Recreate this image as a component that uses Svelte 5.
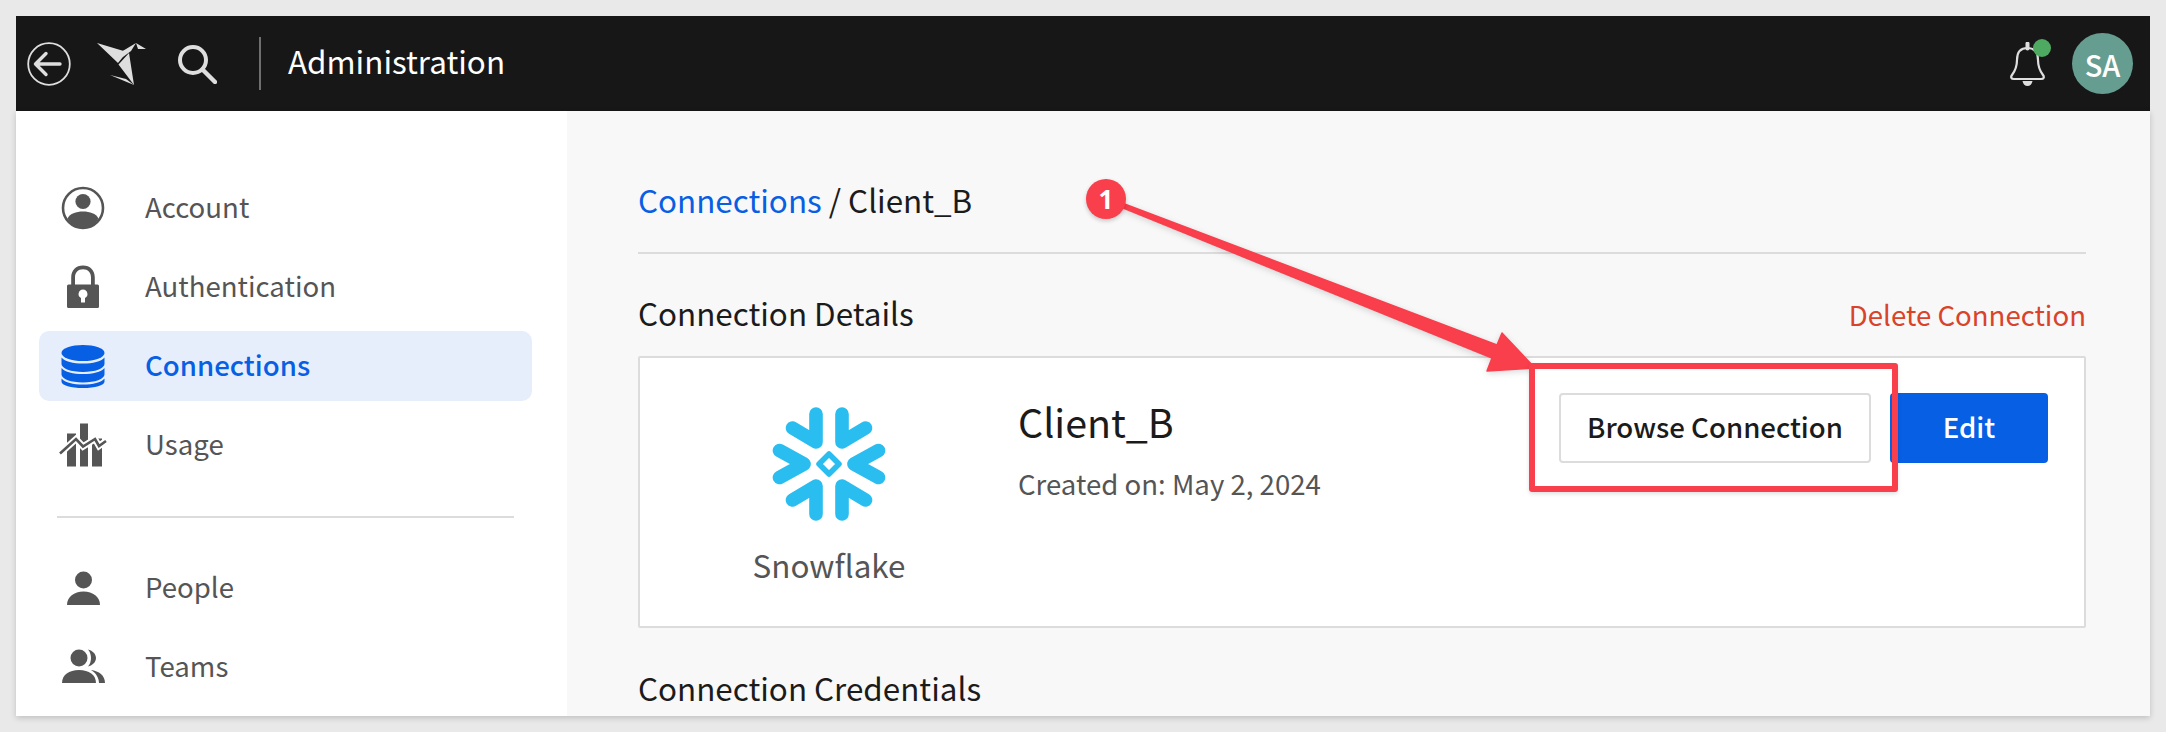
<script>
  const top = [
    { label: 'Account', icon: 'account' },
    { label: 'Authentication', icon: 'lock' },
    { label: 'Connections', icon: 'db', active: true },
    { label: 'Usage', icon: 'usage' }
  ];
  const bottom = [
    { label: 'People', icon: 'person' },
    { label: 'Teams', icon: 'teams' }
  ];
</script>

{#snippet navIcon(name)}
  <svg class="navicon" viewBox="0 0 48 48" aria-hidden="true">
    {#if name === 'account'}
      <circle cx="24" cy="24" r="20" fill="none" stroke="currentColor" stroke-width="2.6"/>
      <circle cx="24" cy="17.5" r="7.6" fill="currentColor"/>
      <path d="M8.5 34.5C11 29.5 17 27.5 24 27.5s13 2 15.5 7C36 40.5 30.5 44 24 44S12 40.5 8.5 34.5z" fill="currentColor"/>
    {:else if name === 'lock'}
      <path fill-rule="evenodd" fill="currentColor" d="M9.5 21.5h2.7V14.500C12.200 7 17 2.500 24 2.500S35.800 7 35.800 14.500v7h2.700a1.500 1.500 0 0 1 1.500 1.500v20.500a1.500 1.500 0 0 1-1.500 1.500h-29A1.500 1.500 0 0 1 8 43.500V23a1.500 1.500 0 0 1 1.500-1.500zM16 21.500h16v-7C32 9.500 29 6.300 24 6.300s-8 3.200-8 8.200zM24 26.500a4.500 4.500 0 0 0-2 8.500v4.500h4V35a4.500 4.500 0 0 0-2-8.500z"/>
    {:else if name === 'db'}
      <ellipse cx="24" cy="11" rx="21.500" ry="8" fill="currentColor"/>
      <path fill="currentColor" d="M2.500 15.500C6 19.500 14 21.500 24 21.500s18-2 21.500-6v6.500c0 4.400-9.600 8-21.500 8S2.500 26.400 2.500 22z"/>
      <path fill="currentColor" d="M2.500 26C6 30 14 32 24 32s18-2 21.500-6v6.500c0 4.400-9.600 8-21.500 8S2.500 36.900 2.500 32.500z"/>
      <path fill="currentColor" d="M2.500 36.500C6 40.500 14 42.500 24 42.500s18-2 21.500-6v3c0 4-9.600 6.500-21.500 6.500S2.500 43.500 2.500 39.500z"/>
    {:else if name === 'usage'}
      <path fill="currentColor" d="M8 12.500h9v33H8zM21 2.500h8v43h-8zM33 17.500h10v28H33z"/>
      <path fill="none" stroke="#fff" stroke-width="6.500" d="M1 32.500L17 18l7 7.500L36 18l4 7 7-5"/>
      <path fill="none" stroke="currentColor" stroke-width="2.600" d="M1 32.500L17 18l7 7.500L36 18l4 7 7-5"/>
    {:else if name === 'person'}
      <circle cx="24.500" cy="16" r="8.500" fill="currentColor"/>
      <path fill="currentColor" d="M8 41C8 33 15 27.500 24.500 27.500S41 33 41 41z"/>
    {:else if name === 'teams'}
      <circle cx="20" cy="15" r="8.500" fill="currentColor"/>
      <path fill="currentColor" d="M29 6.500C33 7.500 37 10.500 37 15s-4 7.500-8 8.500C31 21.500 32 18 32 15s-1-6.500-3-8.500z"/>
      <path fill="currentColor" d="M3 40C3 32 10 27 20 27s17 5 17 13z"/>
      <path fill="currentColor" d="M32 27c8 1 14 5.500 14 13h-6c0-5-3-10-8-13z"/>
    {/if}
  </svg>
{/snippet}

<div class="win">
  <header class="topbar">
    <div class="lead">
      <svg class="back" viewBox="0 0 44 44" aria-hidden="true">
        <circle cx="22" cy="22" r="20.800" fill="none" stroke="#dedede" stroke-width="1.800"/>
        <path d="M33 22H10M19 11.500L8.500 22 19 32.500" fill="none" stroke="#dedede" stroke-width="3.400" stroke-linecap="round" stroke-linejoin="round"/>
      </svg>
      <svg class="logo" viewBox="0 0 49 42" aria-hidden="true">
        <path fill="#dedede" d="M0 0L30 9 21 20zM24 9L39 0 34 8 26 14zM39 0L49 6 41 6zM21.500 21.500L32 10l5 32zM13 32L29 36 37 42z"/>
      </svg>
      <svg class="search" viewBox="0 0 40 40" aria-hidden="true">
        <circle cx="16" cy="16" r="13" fill="none" stroke="#dedede" stroke-width="4"/>
        <path d="M26 26l12 12" stroke="#dedede" stroke-width="4.400" stroke-linecap="round"/>
      </svg>
      <span class="vrule"></span>
      <span class="title">Administration</span>
    </div>
    <div class="trail">
      <div class="bell">
        <svg viewBox="0 0 37 44" aria-hidden="true">
          <path d="M18.500 1.500v5" stroke="#dedede" stroke-width="4" stroke-linecap="round"/>
          <path d="M18.500 6C11 6 8 11 8 18c0 7-2 11-5 15-1.500 2-1 4 2 4h27c3 0 3.500-2 2-4-3-4-5-8-5-15 0-7-3-12-10.500-12z" fill="none" stroke="#dedede" stroke-width="2.200"/>
          <path d="M13.500 39h10c-.5 3-2.500 5-5 5s-4.500-2-5-5z" fill="#dedede"/>
        </svg>
        <span class="dot"></span>
      </div>
      <div class="avatar">SA</div>
    </div>
  </header>

  <div class="body">
    <aside class="side">
      <nav class="group">
        {#each top as item}
          <div class="row" class:active={item.active}>
            <span class="iconbox">{@render navIcon(item.icon)}</span>
            <span class="rowlabel">{item.label}</span>
          </div>
        {/each}
      </nav>
      <hr class="siderule" />
      <nav class="group">
        {#each bottom as item}
          <div class="row">
            <span class="iconbox">{@render navIcon(item.icon)}</span>
            <span class="rowlabel">{item.label}</span>
          </div>
        {/each}
      </nav>
    </aside>

    <main class="main">
      <div class="crumbs"><span class="link">Connections</span> / Client_B</div>
      <div class="sechead">
        <h2>Connection Details</h2>
        <span class="danger">Delete Connection</span>
      </div>
      <section class="card">
        <div class="brand">
          <svg class="flake" viewBox="-57 -57 114 114" aria-hidden="true">
            <g fill="none" stroke="#29bdf0" stroke-width="13.600" stroke-linecap="round" stroke-linejoin="round">
              <path d="M-13-50V-22L-36.500-36"/>
              <path d="M13-50V-22L36.500-36"/>
              <path d="M-49.500-13.500L-25 0-49.500 13.500"/>
              <path d="M49.500-13.500L25 0 49.500 13.500"/>
              <path d="M-13 50V22L-36.500 36"/>
              <path d="M13 50V22L36.500 36"/>
            </g>
            <path fill="none" stroke="#29bdf0" stroke-width="5.500" stroke-linejoin="round" d="M0-10L10 0 0 10-10 0z"/>
          </svg>
          <span class="brandname">Snowflake</span>
        </div>
        <div class="info">
          <div class="name">Client_B</div>
          <div class="meta">Created on: May 2, 2024</div>
        </div>
        <div class="actions">
          <button class="btn ghost">Browse Connection</button>
          <button class="btn solid">Edit</button>
        </div>
      </section>
      <h2 class="cred">Connection Credentials</h2>
    </main>
  </div>

  <svg class="arrow" viewBox="0 0 2166 732" aria-hidden="true">
    <polygon points="1106,197 1497,345 1502,333 1535,368 1487,371 1492,358 1106,201" fill="#f93e4c" stroke="#f93e4c" stroke-width="1.500" stroke-linejoin="round"/>
  </svg>
  <div class="badge">1</div>
  <div class="hilite"></div>
</div>

<style>
  :global(body) {
    margin: 0;
    background: #e9e9e9;
  }
  .win {
    box-sizing: border-box;
    height: 732px;
    padding: 16px;
    font-family: "Noto Sans CJK SC", "Noto Sans CJK JP", "Noto Sans", sans-serif;
    color: #1b1b1b;
    overflow: hidden;
  }
  .topbar {
    height: 95px;
    background: #171717;
    display: flex;
    align-items: center;
    justify-content: space-between;
    padding: 0 17px 0 11px;
  }
  .lead, .trail {
    display: flex;
    align-items: center;
  }
  .back { width: 44px; height: 44px; }
  .logo { width: 49px; height: 42px; margin-left: 26px; }
  .search { width: 40px; height: 40px; margin-left: 31px; }
  .vrule {
    width: 2px;
    height: 53px;
    background: #6f6f6f;
    margin-left: 42px;
  }
  .title {
    font-size: 31.4px;
    color: #fff;
    margin-left: 27px;
    padding-bottom: 6px;
  }
  .bell {
    position: relative;
    width: 37px;
    height: 44px;
    margin-right: 26px;
  }
  .bell svg { width: 37px; height: 44px; display: block; }
  .dot {
    position: absolute;
    left: 24px;
    top: -3px;
    width: 18px;
    height: 18px;
    border-radius: 50%;
    background: #4eaa60;
  }
  .avatar {
    width: 61px;
    height: 61px;
    border-radius: 50%;
    background: #669d91;
    color: #fff;
    font-size: 29px;
    font-weight: 500;
    display: flex;
    align-items: center;
    justify-content: center;
  }
  .body {
    display: flex;
    height: 605px;
    box-shadow: 0 2px 6px rgba(0, 0, 0, 0.18);
    overflow: hidden;
  }
  .side {
    box-sizing: border-box;
    width: 551px;
    flex: none;
    background: #fff;
    padding: 62px 35px 0 23px;
  }
  .group {
    display: flex;
    flex-direction: column;
    gap: 9px;
  }
  .row {
    height: 70px;
    display: flex;
    align-items: center;
    padding-left: 20px;
    border-radius: 10px;
    font-size: 27.6px;
    color: #555;
  }
  .rowlabel { padding-bottom: 4px; }
  .row.active {
    background: #e6eefb;
    color: #075fe4;
    font-weight: 500;
  }
  .iconbox {
    width: 48px;
    height: 48px;
    margin-right: 38px;
  }
  .navicon {
    width: 48px;
    height: 48px;
    display: block;
  }
  .siderule {
    border: 0;
    height: 2px;
    background: #dcdcdc;
    width: 457px;
    margin: 36px 0 35px 18px;
  }
  .main {
    flex: 1;
    background: #f8f8f8;
    padding: 0 64px 0 71px;
  }
  .crumbs {
    padding: 65px 0 28px;
    line-height: 48px;
    font-size: 31.4px;
    border-bottom: 2px solid #dcdcdc;
  }
  .link { color: #075fe4; }
  .sechead {
    display: flex;
    justify-content: space-between;
    align-items: flex-start;
    height: 42px;
    margin: 38px 0 22px;
  }
  h2 {
    margin: 0;
    font-size: 31.4px;
    font-weight: 400;
    line-height: 42px;
  }
  .danger {
    font-size: 27.6px;
    line-height: 44px;
    color: #d9432a;
  }
  .card {
    box-sizing: border-box;
    height: 272px;
    display: flex;
    background: #fff;
    border: 2px solid #dcdcdc;
    border-radius: 2px;
  }
  .brand {
    width: 378px;
    flex: none;
    display: flex;
    flex-direction: column;
    align-items: center;
    padding-top: 49px;
  }
  .flake { width: 114px; height: 114px; display: block; }
  .brandname {
    margin-top: 22px;
    font-size: 31.4px;
    line-height: 44px;
    color: #555;
  }
  .info { flex: 1; padding-top: 37px; }
  .name { font-size: 39.4px; line-height: 52px; }
  .meta { font-size: 27.6px; line-height: 40px; margin-top: 16px; color: #555; }
  .actions {
    display: flex;
    gap: 19px;
    padding: 35px 36px 0 0;
    align-items: flex-start;
  }
  .btn {
    height: 70px;
    font-family: inherit;
    font-size: 27.6px;
    font-weight: 500;
    border-radius: 4px;
    padding: 0 0 5px;
  }
  .ghost {
    width: 312px;
    background: #fff;
    border: 2px solid #dcdcdc;
    color: #1b1b1b;
  }
  .solid {
    width: 158px;
    background: #075fe4;
    border: 0;
    color: #fff;
  }
  .cred { margin-top: 39px; }
  .arrow {
    position: absolute;
    inset: 0;
    width: 2166px;
    height: 732px;
    filter: drop-shadow(0 2px 3px rgba(0, 0, 0, 0.15));
    pointer-events: none;
  }
  .badge {
    position: absolute;
    left: 1086px;
    top: 179px;
    width: 40px;
    height: 40px;
    border-radius: 50%;
    background: #f93e4c;
    color: #fff;
    font-family: "Open Sans", sans-serif;
    font-size: 26px;
    font-weight: 700;
    display: flex;
    align-items: center;
    justify-content: center;
    box-shadow: 0 2px 4px rgba(0, 0, 0, 0.2);
  }
  .hilite {
    position: absolute;
    box-sizing: border-box;
    left: 1529px;
    top: 363px;
    width: 369px;
    height: 129px;
    border: 6px solid #f93e4c;
    border-radius: 3px;
    box-shadow: 0 2px 4px rgba(0, 0, 0, 0.12);
  }
</style>
